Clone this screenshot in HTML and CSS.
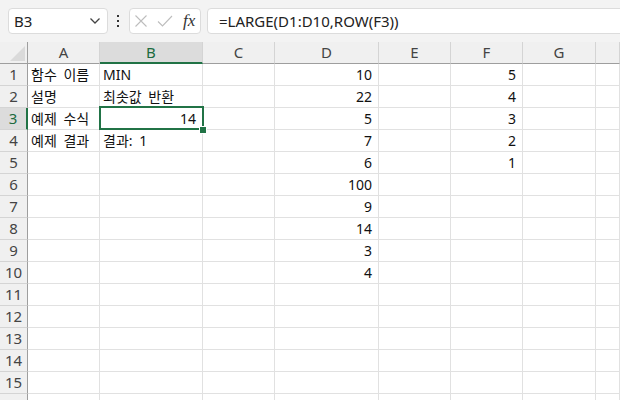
FILE: index.html
```html
<!DOCTYPE html>
<html lang="ko">
<head>
    <meta charset="UTF-8">
    <title>LARGE 함수 예제</title>
    <link rel="stylesheet" href="styles.css">
</head>
<body>
    <!-- Formula bar -->
    <div class="formula-bar">
        <div class="name-box">
            <span>B3</span>
            <svg class="chevron" width="12" height="8" viewBox="0 0 12 8"><polyline points="1.5,1.5 6,6 10.5,1.5" fill="none" stroke="#444" stroke-width="1.3"/></svg>
        </div>
        <svg class="grip" width="4" height="14" viewBox="0 0 4 14"><rect x="1" y="1" width="2" height="2" fill="#333"/><rect x="1" y="6" width="2" height="2" fill="#333"/><rect x="1" y="11" width="2" height="2" fill="#333"/></svg>
        <div class="fx-box">
            <svg width="14" height="14" viewBox="0 0 14 14"><path d="M1.5 1.5 L12.5 12.5 M12.5 1.5 L1.5 12.5" stroke="#bdbdbd" stroke-width="1.1" fill="none"/></svg>
            <svg width="16" height="14" viewBox="0 0 16 14"><polyline points="1,7.5 5.5,12 15,2" stroke="#bdbdbd" stroke-width="1.1" fill="none"/></svg>
            <span class="fx">fx</span>
        </div>
        <div class="formula-input">=LARGE(D1:D10,ROW(F3))</div>
    </div>

    <!-- Sheet grid -->
    <div class="sheet">
        <div class="hd corner"><svg width="28" height="22" viewBox="0 0 28 22"><polygon points="25,4 25,19 10,19" fill="#dadada"/></svg></div>
        <div class="hd col">A</div>
        <div class="hd col sel-col">B</div>
        <div class="hd col">C</div>
        <div class="hd col">D</div>
        <div class="hd col">E</div>
        <div class="hd col">F</div>
        <div class="hd col">G</div>
        <div class="hd col"></div>
    </div>

    <script>
        // sheet data: [A, B, C, D, E, F]
        const data = [
            ['함수 이름', 'MIN', '', 10, '', 5],
            ['설명', '최솟값 반환', '', 22, '', 4],
            ['예제 수식', 14, '', 5, '', 3],
            ['예제 결과', '결과: 1', '', 7, '', 2],
            ['', '', '', 6, '', 1],
            ['', '', '', 100, '', ''],
            ['', '', '', 9, '', ''],
            ['', '', '', 14, '', ''],
            ['', '', '', 3, '', ''],
            ['', '', '', 4, '', '']
        ];

        const sheet = document.querySelector('.sheet');
        for (let r = 1; r <= 16; r++) {
            const row = data[r - 1] || [];
            const head = document.createElement('div');
            head.className = 'hd row' + (r === 3 ? ' sel-row' : '');
            head.textContent = r;
            sheet.appendChild(head);

            for (let c = 0; c < 8; c++) {
                const cell = document.createElement('div');
                cell.className = 'cell';
                const v = row[c];
                if (v !== undefined && v !== '') {
                    cell.textContent = v;
                    if (typeof v === 'number') cell.classList.add('num');
                }
                if (r === 3 && c === 1) {
                    cell.classList.add('active');
                    const handle = document.createElement('span');
                    handle.className = 'handle';
                    cell.appendChild(handle);
                }
                sheet.appendChild(cell);
            }
        }
    </script>
</body>
</html>
```

FILE: styles.css
```css
/* Reset */
html, body {
    margin: 0;
    padding: 0;
    height: 400px;
    overflow: hidden;
    background: #fff;
    font-family: "Noto Sans", "Noto Sans CJK KR", sans-serif;
    color: #222;
}

/* Formula bar */
.formula-bar {
    height: 42px;
    background: #f3f3f3;
    display: flex;
    align-items: center;
    padding-left: 8px;
    box-sizing: border-box;
}

.name-box {
    width: 100px;
    height: 26px;
    box-sizing: border-box;
    background: #fff;
    border: 1px solid #dcdcdc;
    border-radius: 4px;
    display: flex;
    align-items: center;
    justify-content: space-between;
    padding: 0 6px 0 5px;
    font-size: 15px;
}

.grip {
    margin: 0 9px 0 8px;
}

.fx-box {
    width: 72px;
    height: 26px;
    box-sizing: border-box;
    background: #fff;
    border: 1px solid #dcdcdc;
    border-radius: 4px;
    display: flex;
    align-items: center;
    gap: 9px;
    padding-left: 4px;
}

.fx {
    font-family: "Liberation Serif", serif;
    font-style: italic;
    font-size: 17px;
    color: #333;
    margin-left: 1px;
}

.formula-input {
    flex: 1;
    height: 26px;
    box-sizing: border-box;
    margin: 0 -10px 0 6px;
    background: #fff;
    border: 1px solid #dcdcdc;
    border-radius: 4px;
    padding-left: 11px;
    font-size: 15px;
    line-height: 24px;
}

/* Sheet grid */
.sheet {
    display: grid;
    grid-template-columns: 28px 72px 103px 72px 104px 72px 72px 73px 1fr;
    grid-auto-rows: 22px;
    font-size: 14px;
}

.sheet > div {
    box-sizing: border-box;
    border-right: 1px solid #e1e1e1;
    border-bottom: 1px solid #e1e1e1;
    white-space: nowrap;
    overflow: visible;
}

.hd {
    background: #f0f0f0;
    color: #444;
    text-align: center;
    font-size: 15px;
    line-height: 21px;
}

.hd.col {
    border-right-color: #d4d4d4;
    border-bottom-color: #9e9e9e;
}

.hd.row {
    border-right-color: #9e9e9e;
    border-bottom-color: #d4d4d4;
}

.hd.corner {
    border-right-color: #9e9e9e;
    border-bottom-color: #9e9e9e;
}

.hd.corner svg {
    display: block;
}

.sel-col {
    background: #dcdcdc;
    color: #1d6b40;
    border-bottom: 2px solid #217346 !important;
}

.sel-row {
    background: #dcdcdc;
    color: #1d6b40;
    border-right: 2px solid #217346 !important;
}

.cell {
    line-height: 21px;
    padding: 0 3px;
    color: #111;
    word-spacing: 3px;
}

.cell.num {
    text-align: right;
    padding-right: 6px;
}

/* Active cell */
.cell.active {
    position: relative;
}

.cell.active::after {
    content: '';
    position: absolute;
    left: -1px;
    top: -2px;
    right: -2px;
    bottom: -1px;
    border: 2px solid #217346;
}

.handle {
    position: absolute;
    right: -4px;
    bottom: -4px;
    width: 6px;
    height: 6px;
    background: #217346;
    box-shadow: 0 0 0 1px #fff;
    z-index: 2;
}
```
